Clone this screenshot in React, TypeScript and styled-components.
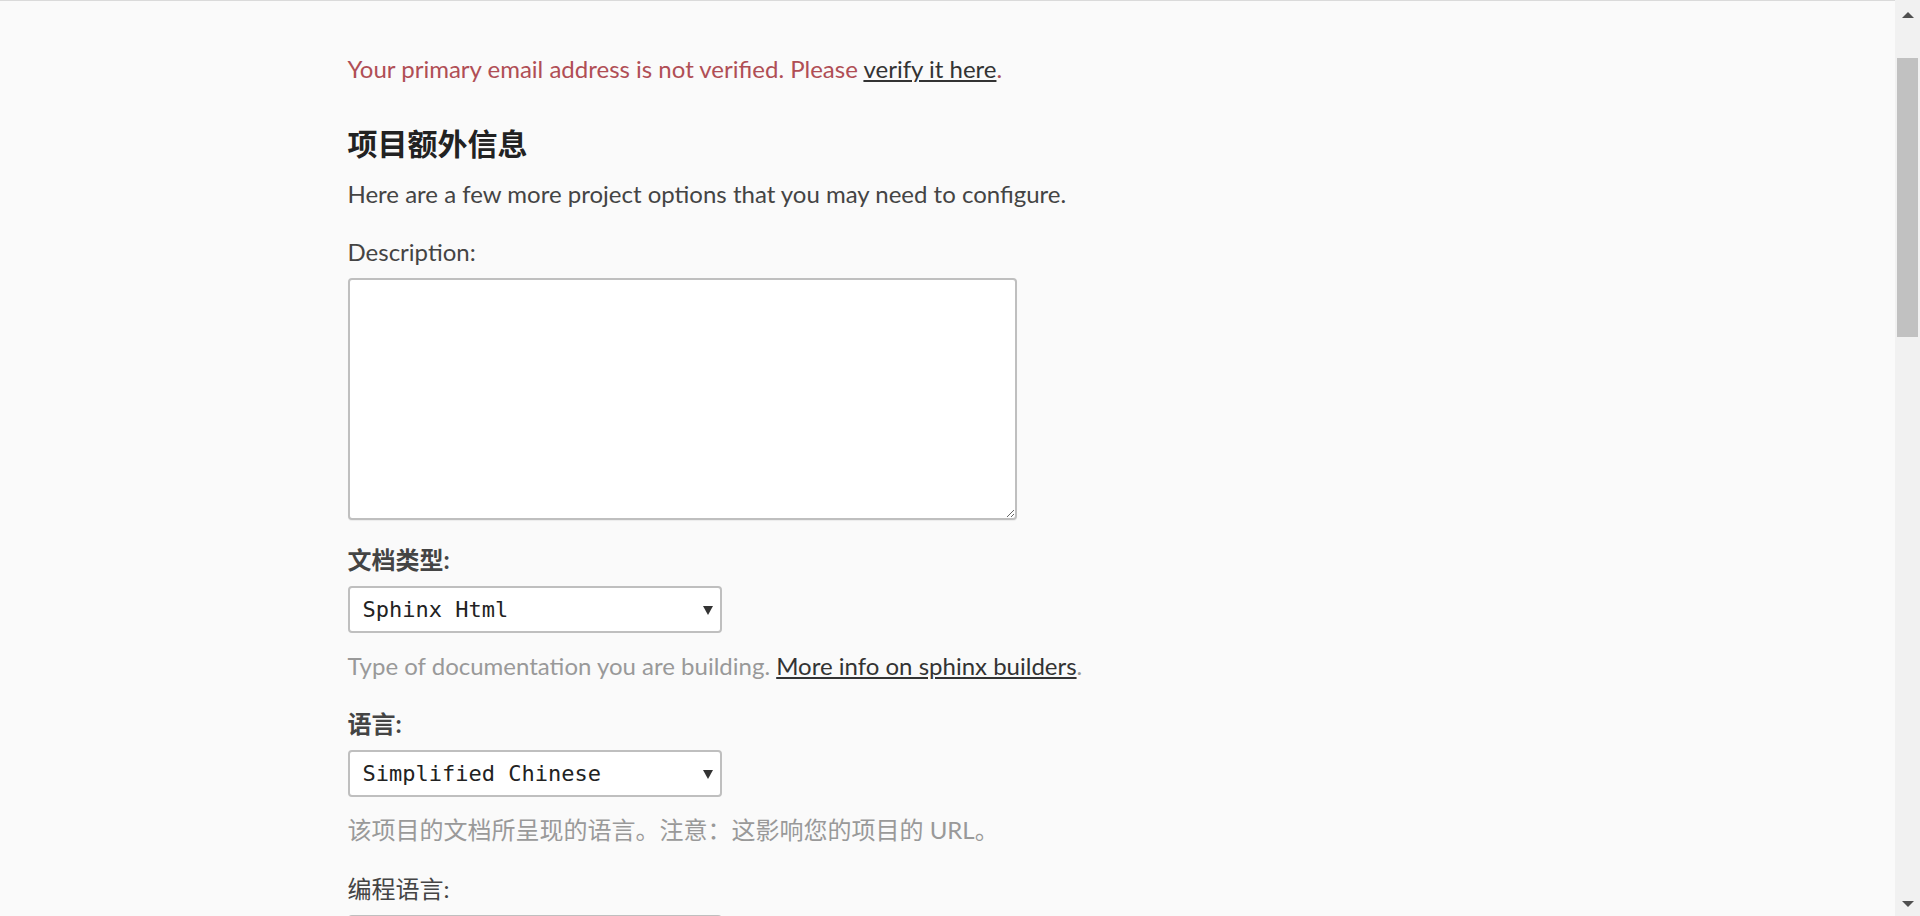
import React from "react";
import styled, { createGlobalStyle } from "styled-components";

const GlobalStyle = createGlobalStyle`
  html, body {
    margin: 0;
    height: 100%;
    overflow: hidden;
    background: #fafafa;
    font-family: Lato, "Noto Sans CJK SC", sans-serif;
  }
  #root {
    height: 100%;
  }
`;

const App: React.FC = () => {
  return (
    <>
      <GlobalStyle />
      <Frame>
        <Page>
          <Container>
            <Notice>
              Your primary email address is not verified. Please <NoticeLink href="#">verify it here</NoticeLink>.
            </Notice>
            <Heading>项目额外信息</Heading>
            <Lead>Here are a few more project options that you may need to configure.</Lead>

            <Field $top={28}>
              <Label>Description:</Label>
              <TextArea />
            </Field>

            <Field $top={25}>
              <Label $strong>文档类型:</Label>
              <SelectWrap>
                <Select defaultValue="sphinx">
                  <option value="sphinx">Sphinx Html</option>
                </Select>
                <Caret />
              </SelectWrap>
              <Hint>
                Type of documentation you are building. <HintLink href="#">More info on sphinx builders</HintLink>.
              </Hint>
            </Field>

            <Field $top={28}>
              <Label $strong>语言:</Label>
              <SelectWrap>
                <Select defaultValue="zh_CN">
                  <option value="zh_CN">Simplified Chinese</option>
                </Select>
                <Caret />
              </SelectWrap>
              <Hint>该项目的文档所呈现的语言。注意：这影响您的项目的 URL。</Hint>
            </Field>

            <Field $top={29}>
              <Label>编程语言:</Label>
              <SelectWrap>
                <Select defaultValue="py">
                  <option value="py">Python</option>
                </Select>
                <Caret />
              </SelectWrap>
            </Field>
          </Container>
        </Page>
        <Scrollbar>
          <ScrollButton>
            <Arrow $dir="up" />
          </ScrollButton>
          <Track>
            <Thumb />
          </Track>
          <ScrollButton>
            <Arrow $dir="down" />
          </ScrollButton>
        </Scrollbar>
      </Frame>
    </>
  );
};

export default App;

const Frame = styled.div`
  display: flex;
  height: 100vh;
`;
const Page = styled.main`
  flex: 1;
  min-width: 0;
  overflow: hidden;
  border-top: 1px solid #dadada;
`;
const Container = styled.div`
  width: 1200px;
  margin: 0 auto;
  padding-top: 53px;
  display: flex;
  flex-direction: column;
  align-items: flex-start;
`;
const Notice = styled.p`
  margin: 0;
  font-size: 24px;
  line-height: 30px;
  color: #b04e55;
`;
const NoticeLink = styled.a`
  color: #333;
  text-decoration: underline;
`;
const Heading = styled.h2`
  margin: 41px 0 0;
  font-size: 30px;
  line-height: 36px;
  font-weight: 700;
  color: #222;
`;
const Lead = styled.p`
  margin: 18px 0 0;
  font-size: 24px;
  line-height: 30px;
  color: #444;
`;
const Field = styled.div<{ $top: number }>`
  margin-top: ${({ $top }) => $top}px;
  display: flex;
  flex-direction: column;
  align-items: flex-start;
`;
const Label = styled.label<{ $strong?: boolean }>`
  font-size: 24px;
  line-height: 30px;
  font-weight: ${({ $strong }) => ($strong ? 700 : 400)};
  color: #444;
  margin-bottom: 11px;
`;
const TextArea = styled.textarea`
  box-sizing: border-box;
  width: 669px;
  height: 242px;
  margin: 0;
  border: 2px solid #bfbfbf;
  border-radius: 4px;
  background: #fff;
  box-shadow: 0 1px 1px rgba(0, 0, 0, 0.06);
  font-size: 20px;
`;
const SelectWrap = styled.div`
  position: relative;
  width: 374px;
  height: 47px;
`;
const Select = styled.select`
  appearance: none;
  box-sizing: border-box;
  width: 100%;
  height: 100%;
  margin: 0;
  padding: 0 40px 0 13px;
  border: 2px solid #bfbfbf;
  border-radius: 4px;
  background: #fff;
  font-family: "DejaVu Sans Mono", monospace;
  font-size: 22px;
  color: #222;
`;
const Caret = styled.span`
  position: absolute;
  right: 9px;
  top: 20px;
  width: 0;
  height: 0;
  border-left: 5px solid transparent;
  border-right: 5px solid transparent;
  border-top: 9px solid #333;
  pointer-events: none;
`;
const Hint = styled.p`
  margin: 18px 0 0;
  font-size: 24px;
  line-height: 30px;
  color: #999;
`;
const HintLink = styled.a`
  color: #333;
  text-decoration: underline;
`;
const Scrollbar = styled.div`
  width: 25px;
  flex: none;
  display: flex;
  flex-direction: column;
  background: #f1f1f1;
`;
const ScrollButton = styled.div`
  height: 25px;
  flex: none;
  display: flex;
  align-items: center;
  justify-content: center;
`;
const Arrow = styled.span<{ $dir: "up" | "down" }>`
  width: 0;
  height: 0;
  border-left: 6px solid transparent;
  border-right: 6px solid transparent;
  ${({ $dir }) => ($dir === "up" ? "border-bottom: 6px solid #505050;" : "border-top: 6px solid #505050;")}
  margin-top: ${({ $dir }) => ($dir === "up" ? "4px" : "0")};
`;
const Track = styled.div`
  flex: 1;
  padding: 33px 2px 0;
`;
const Thumb = styled.div`
  height: 279px;
  background: #c1c1c1;
`;
